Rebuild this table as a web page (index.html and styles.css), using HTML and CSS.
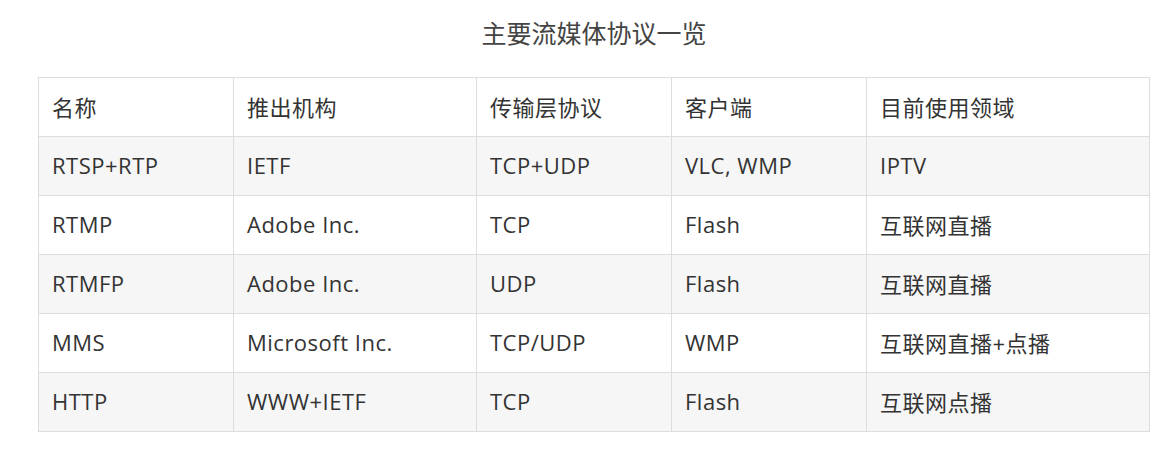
FILE: index.html
```html
<!DOCTYPE html>
<html lang="zh">
<head>
<meta charset="utf-8">
<link rel="stylesheet" href="styles.css">
</head>
<body>
<div class="wrap">
  <div class="title">主要流媒体协议一览</div>
  <table class="proto">
    <colgroup>
      <col style="width:195px"><col style="width:243px"><col style="width:195px"><col style="width:195px"><col>
    </colgroup>
    <tr class="head"><td>名称</td><td>推出机构</td><td>传输层协议</td><td>客户端</td><td>目前使用领域</td></tr>
    <tr class="alt"><td>RTSP+RTP</td><td>IETF</td><td>TCP+UDP</td><td>VLC, WMP</td><td>IPTV</td></tr>
    <tr><td>RTMP</td><td>Adobe Inc.</td><td>TCP</td><td>Flash</td><td>互联网直播</td></tr>
    <tr class="alt"><td>RTMFP</td><td>Adobe Inc.</td><td>UDP</td><td>Flash</td><td>互联网直播</td></tr>
    <tr><td>MMS</td><td>Microsoft Inc.</td><td>TCP/UDP</td><td>WMP</td><td>互联网直播+点播</td></tr>
    <tr class="alt"><td>HTTP</td><td>WWW+IETF</td><td>TCP</td><td>Flash</td><td>互联网点播</td></tr>
  </table>
</div>
</body>
</html>
```
FILE: styles.css
```css
html, body {
  margin: 0;
  padding: 0;
  background: #fff;
}
body {
  font-family: "Open Sans", "Noto Sans CJK SC", sans-serif;
  color: #333;
}
.wrap {
  width: 1112px;
  margin-left: 38px;
}
.title {
  text-align: center;
  font-size: 25px;
  line-height: 34px;
  padding-top: 16px;
  height: 77px;
  box-sizing: border-box;
  color: #444;
}
.proto {
  width: 1112px;
  border-collapse: collapse;
  table-layout: fixed;
  font-size: 22px;
  letter-spacing: 0.5px;
}
.proto td {
  border: 1px solid #ddd;
  height: 59px;
  padding: 0 13px 2px;
  box-sizing: border-box;
  vertical-align: middle;
  white-space: nowrap;
}
.proto tr.alt td {
  background: #f6f6f6;
}
```
